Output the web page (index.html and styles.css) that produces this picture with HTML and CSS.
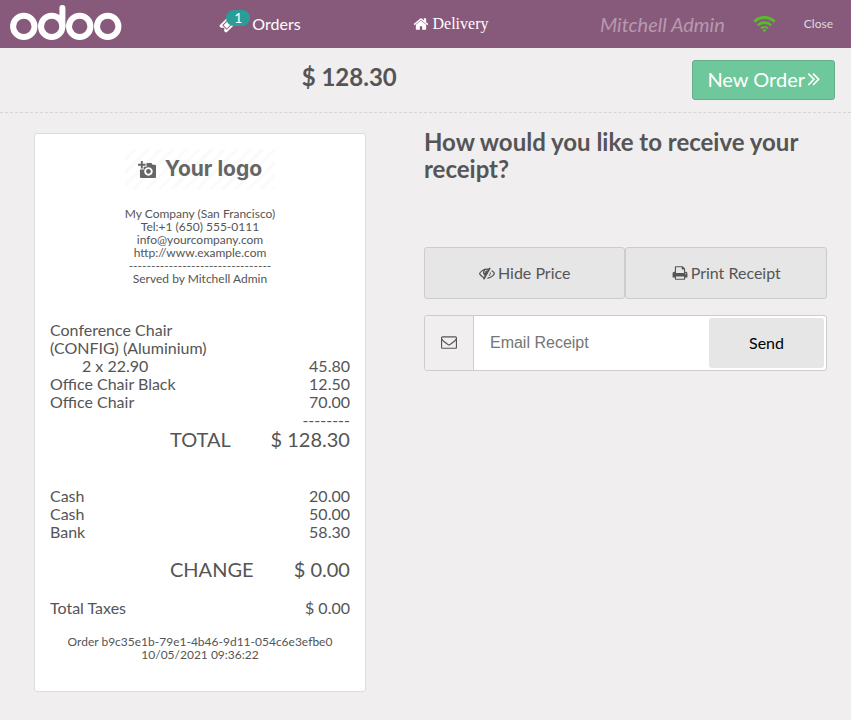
FILE: index.html
```html
<!DOCTYPE html>
<html lang="en">
<head>
<meta charset="utf-8">
<title>Point of Sale</title>
<link rel="stylesheet" href="styles.css">
</head>
<body>
<header class="topbar">
  <a class="brand" href="#" aria-label="odoo">
    <svg class="brand-logo" viewBox="0 0 112 38" fill="none" stroke="#fff" stroke-width="6">
      <circle cx="13.800" cy="21.400" r="10.700"/>
      <circle cx="41.700" cy="21.400" r="10.700"/>
      <path d="M52.400 21.400V3" stroke-linecap="round"/>
      <circle cx="69.700" cy="21.400" r="10.700"/>
      <circle cx="97.700" cy="21.400" r="10.700"/>
    </svg>
  </a>
  <button class="nav-button" type="button">
    <span class="ticket">
      <svg class="icon ticket-icon" viewBox="0 0 1792 1792"><path d="M1024 452l316 316-572 572-316-316zm-211 979l618-618q19-19 19-45t-19-45l-362-362q-18-18-45-18t-45 18l-618 618q-19 19-19 45t19 45l362 362q18 18 45 18t45-18zm889-637l-907 908q-37 37-90.500 37t-90.500-37l-126-126q56-56 56-136t-56-136-136-56-136 56l-125-126q-37-37-37-90.500t37-90.500l907-906q37-37 90.500-37t90.500 37l125 125q-56 56-56 136t56 136 136 56 136-56l126 125q37 37 37 90.500t-37 90.500z"/></svg>
      <span class="badge">1</span>
    </span>
    <span>Orders</span>
  </button>
  <button class="nav-button nav-serif" type="button">
    <svg class="icon" viewBox="0 0 1792 1792"><path d="M1472 992v480q0 26-19 45t-45 19h-384v-384h-256v384h-384q-26 0-45-19t-19-45v-480q0-1 .5-3t.5-3l575-474 575 474q1 2 1 6zm223-69l-62 74q-8 9-21 11h-3q-13 0-21-7l-692-577-692 577q-12 8-24 7-13-2-21-11l-62-74q-8-10-7-23.500t11-21.500l719-599q32-26 76-26t76 26l244 204v-195q0-14 9-23t23-9h192q14 0 23 9t9 23v408l219 182q10 8 11 21.500t-7 23.500z"/></svg>
    <span>Delivery</span>
  </button>
  <div class="status">
    <span class="username">Mitchell Admin</span>
    <svg class="wifi" viewBox="0 0 24 18" fill="none" stroke="#5cb82e" stroke-width="3.100">
      <path d="M1.400 6.600a15.200 15.200 0 0 1 21.200 0"/>
      <path d="M5 10.400a10 10 0 0 1 14 0" stroke-width="2.700"/>
      <path d="M8.400 13.700a5.200 5.200 0 0 1 7.200 0" stroke-width="2.300"/>
      <path d="M12 17.700l-2.200-2.200a3.200 3.200 0 0 1 4.400 0z" fill="#5cb82e" stroke="none"/>
    </svg>
    <button class="close" type="button">Close</button>
  </div>
</header>

<section class="summary">
  <h1 class="amount">$ 128.30</h1>
  <button class="new-order" type="button">
    <span>New Order</span>
    <svg class="chevrons" viewBox="410 448 974 974"><path d="M979 960q0 13-10 23l-466 466q-10 10-23 10t-23-10l-50-50q-10-10-10-23t10-23l393-393-393-393q-10-10-10-23t10-23l50-50q10-10 23-10t23 10l466 466q10 10 10 23zm384 0q0 13-10 23l-466 466q-10 10-23 10t-23-10l-50-50q-10-10-10-23t10-23l393-393-393-393q-10-10-10-23t10-23l50-50q10-10 23-10t23 10l466 466q10 10 10 23z"/></svg>
  </button>
</section>

<main class="content">
  <div class="receipt-pane">
    <article class="receipt">
      <div class="company-logo">
        <svg class="camera" viewBox="0 0 20 18" fill="#666">
          <path d="M3 0h2v3h3v2H5v3H3V5H0V3h3z"/>
          <path fill-rule="evenodd" d="M9 2h5l1.500 2H18q1 0 1 1v12q0 1-1 1H3q-1 0-1-1V9h4V6h3zM11 6.500a4.500 4.500 0 1 0 .01 0zM11 8.500a2.500 2.500 0 1 1-.01 0z"/>
        </svg>
        <span>Your logo</span>
      </div>
      <div class="fine-print contact">
        <div>My Company (San Francisco)</div>
        <div>Tel:+1 (650) 555-0111</div>
        <div>info@yourcompany.com</div>
        <div>http://www.example.com</div>
        <div>--------------------------------</div>
        <div>Served by Mitchell Admin</div>
      </div>
      <div class="lines">
        <div class="product">Conference Chair (CONFIG) (Aluminium)</div>
        <div class="row"><span class="quantity">2 x 22.90</span><span>45.80</span></div>
        <div class="row"><span>Office Chair Black</span><span>12.50</span></div>
        <div class="row"><span>Office Chair</span><span>70.00</span></div>
        <div class="rule">--------</div>
      </div>
      <div class="row total"><span>TOTAL</span><span>$ 128.30</span></div>
      <div class="payments">
        <div class="row"><span>Cash</span><span>20.00</span></div>
        <div class="row"><span>Cash</span><span>50.00</span></div>
        <div class="row"><span>Bank</span><span>58.30</span></div>
      </div>
      <div class="row total"><span>CHANGE</span><span>$ 0.00</span></div>
      <div class="row taxes"><span>Total Taxes</span><span>$ 0.00</span></div>
      <div class="fine-print">
        <div>Order b9c35e1b-79e1-4b46-9d11-054c6e3efbe0</div>
        <div>10/05/2021 09:36:22</div>
      </div>
    </article>
  </div>

  <div class="actions">
    <h2 class="question">How would you like to receive your receipt?</h2>
    <div class="buttons">
      <button class="action" type="button">
        <svg class="icon" viewBox="0 0 1792 1792"><path d="M555 1335l78-141q-87-63-136-159t-49-203q0-121 61-225-229 117-381 353 167 258 427 375zm389-759q0-20-14-34t-34-14q-125 0-214.500 89.500t-89.500 214.500q0 20 14 34t34 14 34-14 14-34q0-86 61-147t147-61q20 0 34-14t14-34zm363-191q0 7-1 9-106 189-316 567t-315 566l-49 89q-10 16-28 16-12 0-134-70-16-10-16-28 0-12 44-87-143-65-263.500-173t-208.500-245q-20-31-20-69t20-69q153-235 380-371t496-136q89 0 180 17l54-97q10-16 28-16 5 0 18 6t31 15.500 33 18.500 31.500 18.500 19.500 11.500q16 10 16 27zm37 447q0 139-79 253.500t-209 164.500l280-502q8 45 8 84zm448 128q0 35-20 69-39 64-109 145-150 172-347.500 267t-419.500 95l74-132q212-18 392.500-137t301.500-307q-115-179-282-294l63-112q95 64 182.500 153t144.500 184q20 34 20 69z"/></svg>
        <span>Hide Price</span>
      </button>
      <button class="action" type="button">
        <svg class="icon" viewBox="0 0 1792 1792"><path d="M448 1536h896v-256h-896v256zm0-640h896v-384h-160q-40 0-68-28t-28-68v-160h-640v640zm1152 64q0-26-19-45t-45-19-45 19-19 45 19 45 45 19 45-19 19-45zm128 0v416q0 13-9.500 22.500t-22.500 9.500h-224v160q0 40-28 68t-68 28h-960q-40 0-68-28t-28-68v-160h-224q-13 0-22.500-9.500t-9.500-22.500v-416q0-79 56.500-135.500t135.500-56.500h64v-544q0-40 28-68t68-28h672q40 0 88 20t76 48l152 152q28 28 48 76t20 88v256h64q79 0 135.500 56.500t56.500 135.500z"/></svg>
        <span>Print Receipt</span>
      </button>
    </div>
    <form class="email">
      <label class="email-icon" for="email" aria-label="Email address">
        <svg class="icon" viewBox="0 0 1792 1792"><path d="M1664 1504v-768q-32 36-69 66-268 206-426 338-51 43-83 67t-86.500 48.500-102.500 24.500h-2q-48 0-102.500-24.500t-86.500-48.500-83-67q-158-132-426-338-37-30-69-66v768q0 13 9.500 22.500t22.500 9.500h1472q13 0 22.500-9.500t9.500-22.500zm0-1051v-24.500l-.5-13-3-12.500-5.500-9-9-7.500-14-2.500h-1472q-13 0-22.500 9.500t-9.500 22.500q0 168 147 284 193 152 401 317 6 5 35 29.500t46 37.500 44.500 31.500 50.500 27.500 43 9h2q20 0 43-9t50.500-27.500 44.500-31.500 46-37.500 35-29.500q208-165 401-317 54-43 100.500-115.500t46.500-131.500zm128-37v1088q0 66-47 113t-113 47h-1472q-66 0-113-47t-47-113v-1088q0-66 47-113t113-47h1472q66 0 113 47t47 113z"/></svg>
      </label>
      <input class="email-input" id="email" type="email" placeholder="Email Receipt">
      <button class="send" type="button">Send</button>
    </form>
  </div>
</main>
</body>
</html>
```

FILE: styles.css
```css
* {
  box-sizing: border-box;
}

body {
  margin: 0;
  min-height: 100vh;
  background: #f0eeee;
  color: #555;
  font: 16px/18px Lato, sans-serif;
}

button {
  padding: 0;
  border: 0;
  background: none;
  color: inherit;
  font: inherit;
  cursor: pointer;
}

.icon {
  display: block;
  flex: none;
  width: 16px;
  height: 16px;
  fill: currentColor;
}

.topbar {
  display: grid;
  grid-template-columns: 165fr 190fr 191fr 305fr;
  align-items: center;
  height: 48px;
  background: #875a7b;
  color: #fff;
}

.brand {
  padding-left: 10px;
}

.brand-logo {
  display: block;
  width: 112px;
  height: 38px;
}

.nav-button {
  display: flex;
  align-items: center;
  justify-content: center;
  gap: 4px;
}

.nav-serif {
  font-family: "Liberation Serif", serif;
  line-height: 20px;
}

.ticket {
  position: relative;
  width: 29px;
}

.ticket-icon {
  width: 18px;
  height: 18px;
}

.badge {
  position: absolute;
  top: -5px;
  left: 7px;
  width: 24px;
  height: 16px;
  border-radius: 8px;
  background: #2a9d98;
  font-size: 14px;
  line-height: 16px;
}

.status {
  display: flex;
  align-items: center;
  justify-content: flex-end;
  gap: 28px;
  padding-right: 18px;
}

.username {
  color: #b799b0;
  font-size: 20px;
  font-style: italic;
  line-height: 24px;
}

.wifi {
  width: 23px;
  height: 18px;
}

.close {
  color: #ddd;
  font-size: 12px;
}

.summary {
  display: grid;
  grid-template-columns: 1fr auto;
  align-items: start;
  height: 65px;
  padding: 12px 16px 0 6px;
  border-bottom: 1px dashed #d6d4d4;
}

.amount {
  margin: 0;
  font-size: 24px;
  line-height: 34px;
  text-align: center;
}

.new-order {
  display: flex;
  align-items: center;
  gap: 3px;
  height: 40px;
  padding: 0 14px 2px;
  border: 1px solid #64af8a;
  border-radius: 3px;
  background: #6ec89b;
  color: #fff;
  font-size: 20px;
}

.chevrons {
  width: 12px;
  height: 12px;
  fill: currentColor;
  overflow: visible;
}

.content {
  display: grid;
  grid-template-columns: minmax(0, 47fr) minmax(0, 53fr);
}

.receipt-pane {
  padding: 20px 0 28px;
}

.receipt {
  max-width: 332px;
  margin: 0 auto;
  padding: 15px 15px 30px;
  border: 1px solid #dcdcdc;
  border-radius: 3px;
  background: #fff;
}

.company-logo {
  display: flex;
  align-items: center;
  justify-content: center;
  gap: 8px;
  width: 150px;
  height: 40px;
  margin: 0 auto 18px;
  background: repeating-linear-gradient(135deg, #fff 0 6px, #fafafa 6px 9px);
  color: #666;
  font-family: Inter, sans-serif;
  font-size: 21px;
  font-weight: 700;
}

.camera {
  flex: none;
  width: 19px;
  height: 17px;
}

.fine-print {
  font-size: 12px;
  line-height: 13px;
  text-align: center;
}

.contact {
  margin-bottom: 36px;
}

.product {
  width: 60%;
}

.quantity {
  padding-left: 32px;
}

.row {
  display: flex;
  justify-content: space-between;
}

.rule {
  text-align: right;
}

.total {
  padding-left: 40%;
  font-size: 20px;
  line-height: 20px;
}

.payments {
  margin: 38px 0 18px;
}

.taxes {
  margin: 20px 0 18px;
}

.actions {
  padding: 15px 24px;
}

.question {
  margin: 0 0 65px;
  font-size: 24px;
  line-height: 27px;
}

.buttons {
  display: grid;
  grid-template-columns: 1fr 1fr;
  margin-bottom: 16px;
}

.action {
  display: flex;
  align-items: center;
  justify-content: center;
  gap: 3px;
  height: 52px;
  border: 1px solid #ccc;
  border-radius: 3px;
  background: #e6e6e6;
}

.email {
  display: flex;
  height: 56px;
  border: 1px solid #ccc;
  border-radius: 3px;
  background: #fff;
}

.email-icon {
  display: grid;
  place-items: center;
  width: 49px;
  padding-bottom: 2px;
  border-right: 1px solid #ccc;
  border-radius: 3px 0 0 3px;
  background: #f0eeee;
}

.email-input {
  flex: 1;
  min-width: 0;
  padding: 0 16px;
  border: 0;
  background: none;
  font: 16px "Liberation Sans", sans-serif;
}

.email-input::placeholder {
  color: #757575;
}

.send {
  width: 115px;
  margin: 2px;
  border-radius: 3px;
  background: #e6e6e6;
  color: #000;
}
```
